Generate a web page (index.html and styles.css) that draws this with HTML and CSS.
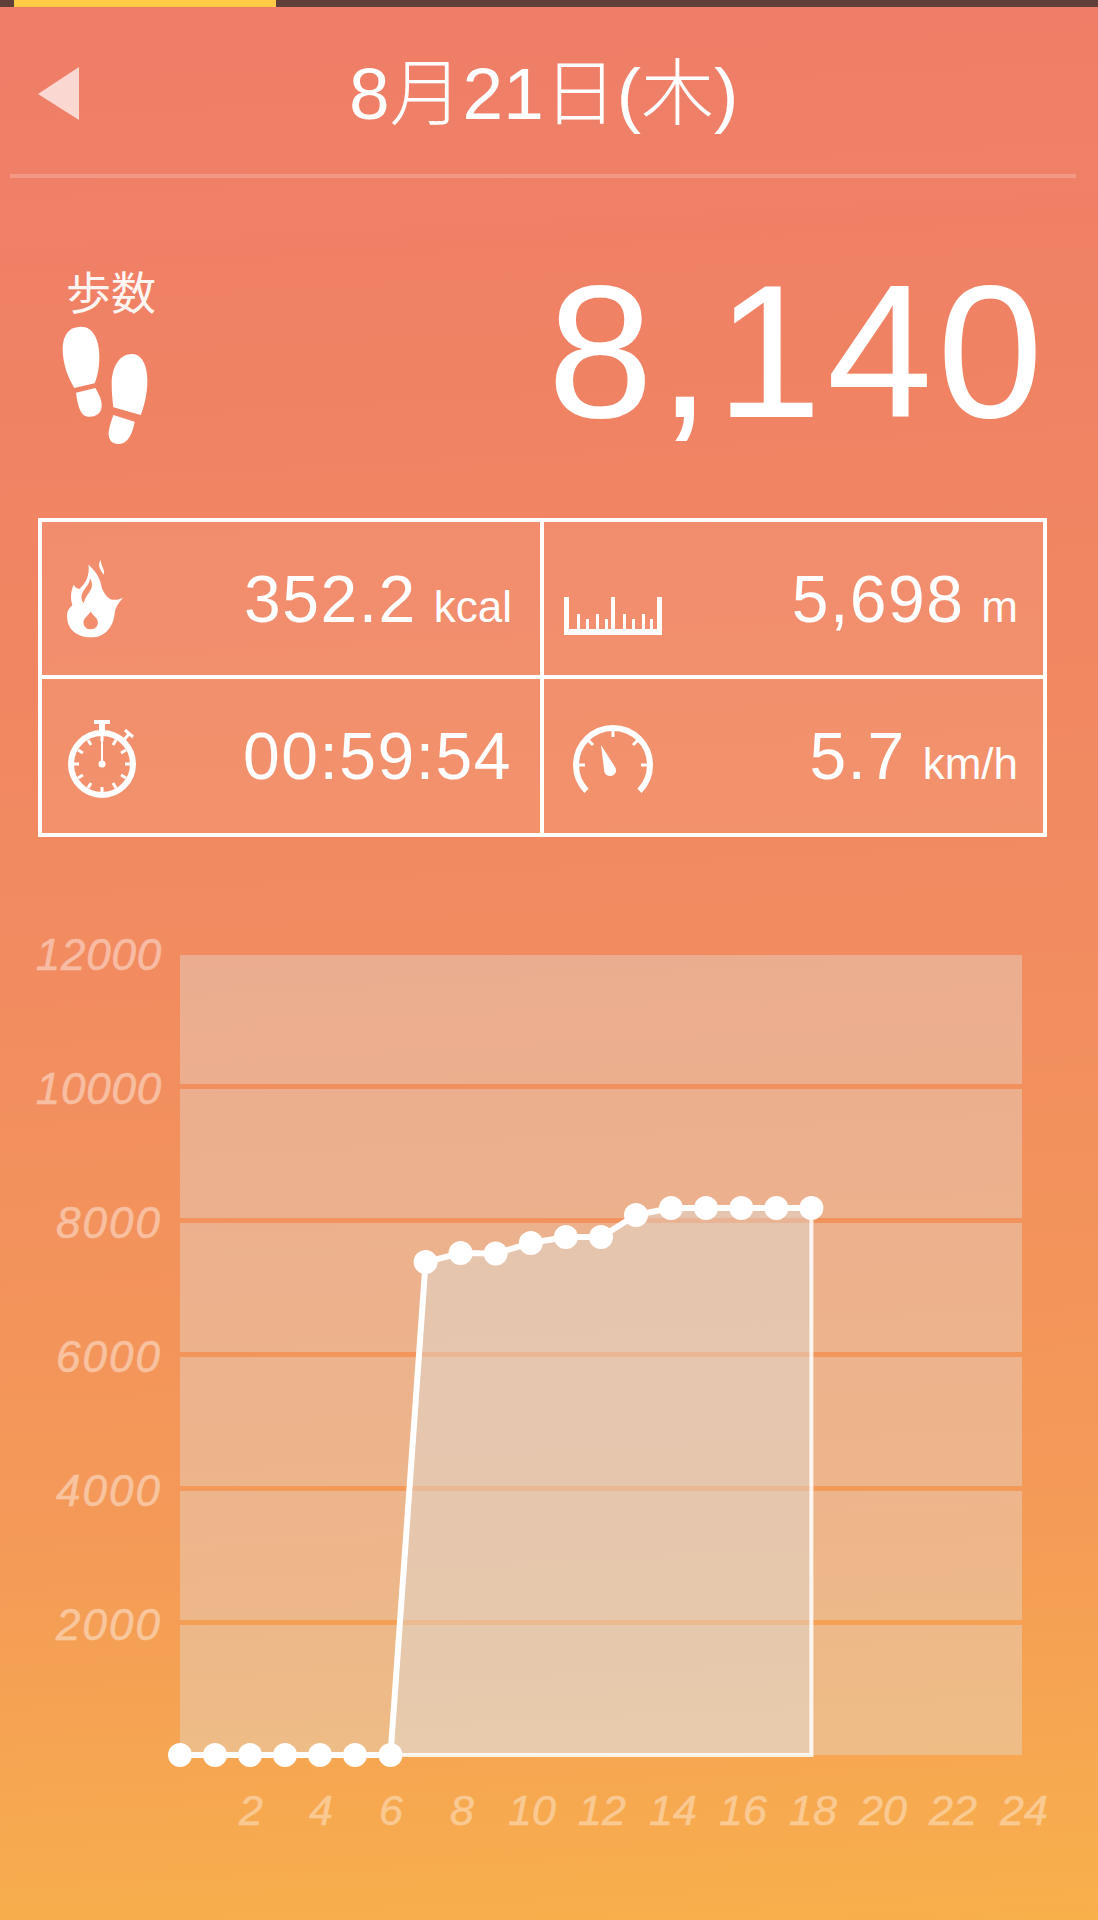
FILE: index.html
```html
<!DOCTYPE html>
<html lang="ja">
<head>
<meta charset="utf-8">
<title>8月21日(木)</title>
<link rel="stylesheet" href="styles.css">
</head>
<body>
<main class="page">
  <div class="status"><div class="status-fill"></div></div>
  <header class="header">
    <svg class="back" viewBox="0 0 41 53"><polygon points="41,0 41,53 0,27"/></svg>
    <h1 class="title">8月21日(木)</h1>
  </header>
  <div class="rule"></div>

  <section class="summary">
    <div class="steps-label">
      <div class="steps-name">歩数</div>
      <svg class="feet" viewBox="90 225 270 360">
        <path d="M153 230C190 230 208 270 208 322C208 358 200 385 194 400L133 414C115 385 98 345 98 295C98 255 118 230 153 230Z"/>
        <path d="M138 428L196 414C208 435 216 450 215 470C213 490 198 500 178 500C155 500 145 480 138 428Z"/>
        <path d="M306 312C338 312 352 350 352 395C352 430 342 470 332 495L250 472C246 440 245 420 245 395C247 345 272 312 306 312Z"/>
        <path d="M250 495L314 515C308 548 295 582 265 582C243 582 234 565 236 545C238 530 245 510 250 495Z"/>
      </svg>
    </div>
    <div class="steps-value">8,140</div>
  </section>

  <section class="stats">
    <div class="cell cell-a">
      <svg class="icon icon-flame" viewBox="100 145 180 245">
        <path fill-rule="evenodd" d="M180 382C140 382 108 360 108 318C108 305 112 296 124 286C118 268 118 245 128 225C134 235 140 238 146 236C165 220 176 195 172 165C192 182 208 205 212 235C218 250 226 262 238 268C250 272 264 270 275 264C262 280 252 292 250 312C246 352 220 382 180 382ZM178 305C170 320 156 324 157 340C159 352 168 358 178 358C192 358 200 350 200 338C200 324 188 320 178 305Z"/>
        <path class="cut" d="M176 205C178 222 160 234 153 252C149 264 152 274 158 280C161 260 178 248 182 230C184 220 180 212 176 205Z"/>
        <path d="M208 150C200 165 204 178 218 195C222 180 210 170 208 150Z"/>
      </svg>
      <div class="reading"><span class="num">352.2</span><span class="unit">kcal</span></div>
    </div>
    <div class="cell cell-b">
      <svg class="icon icon-ruler" viewBox="0 0 98 38">
        <path d="M0 0H5V32H13V17H16V32H22V22H25V32H32V17H35V32H41V22H44V32H47V0H51V32H59V17H62V32H68V22H71V32H78V17H81V32H86V22H89V32H93V0H98V38H0Z"/>
      </svg>
      <div class="reading"><span class="num">5,698</span><span class="unit">m</span></div>
    </div>
    <div class="cell cell-c">
      <svg class="icon icon-watch" viewBox="0 0 70 80">
        <circle class="line" cx="34" cy="46" r="31"/>
        <rect x="26" y="2" width="16" height="4"/>
        <rect x="31" y="5" width="6" height="9"/>
        <path class="line thin" d="M55 23L61 16M57 12L65 19"/>
        <path class="line tick" d="M34 17V23M34 69V75M5 46H11M57 46H63M20 22L23 27M45 65L48 70M10 32L15 35M53 57L58 60M10 60L15 57M53 35L58 32M20 70L23 65M45 27L48 22"/>
        <rect x="33" y="22" width="2" height="24"/>
        <circle cx="34" cy="46" r="3.500"/>
      </svg>
      <div class="reading"><span class="num">00:59:54</span></div>
    </div>
    <div class="cell cell-d">
      <svg class="icon icon-gauge" viewBox="0 0 82 70">
        <path class="line arc" d="M14.500 66.800A37 37 0 1 1 67.500 66.800"/>
        <path class="line tick" d="M41 4V13M15 15L21 21M67 15L61 21M4 41H13M69 41H78"/>
        <path d="M29 21L43 43C46 48 42 52 38 52C34 52 32 49 32 45Z"/>
      </svg>
      <div class="reading"><span class="num">5.7</span><span class="unit">km/h</span></div>
    </div>
  </section>

  <svg class="chart" viewBox="0 837 1098 1083">
    <g class="bands">
      <rect x="180" y="955" width="842" height="129"/>
      <rect x="180" y="1089" width="842" height="129"/>
      <rect x="180" y="1223" width="842" height="129"/>
      <rect x="180" y="1357" width="842" height="129"/>
      <rect x="180" y="1491" width="842" height="129"/>
      <rect x="180" y="1625" width="842" height="130"/>
    </g>
    <g class="y-labels">
      <text x="162" y="970">12000</text>
      <text x="162" y="1104">10000</text>
      <text class="wide" x="162" y="1238">8000</text>
      <text class="wide" x="162" y="1372">6000</text>
      <text class="wide" x="162" y="1506">4000</text>
      <text class="wide" x="162" y="1640">2000</text>
    </g>
    <polygon class="area" points="390.500,1755 425.600,1262 460.600,1253 495.700,1253.500 530.800,1243 565.900,1237 601,1237 636,1215 671,1208 706,1208 741.300,1208 776.400,1208 811.400,1208 811.400,1755"/>
    <polyline class="edge" points="811.400,1208 811.400,1755 390.500,1755"/>
    <polyline class="trace" points="180,1755 215,1755 250,1755 285,1755 320,1755 355,1755 390.500,1755 425.600,1262 460.600,1253 495.700,1253.500 530.800,1243 565.900,1237 601,1237 636,1215 671,1208 706,1208 741.300,1208 776.400,1208 811.400,1208"/>
    <g class="dots">
      <circle cx="180" cy="1755" r="12"/><circle cx="215" cy="1755" r="12"/><circle cx="250" cy="1755" r="12"/><circle cx="285" cy="1755" r="12"/><circle cx="320" cy="1755" r="12"/><circle cx="355" cy="1755" r="12"/><circle cx="390.500" cy="1755" r="12"/>
      <circle cx="425.600" cy="1262" r="12"/><circle cx="460.600" cy="1253" r="12"/><circle cx="495.700" cy="1253.500" r="12"/><circle cx="530.800" cy="1243" r="12"/><circle cx="565.900" cy="1237" r="12"/><circle cx="601" cy="1237" r="12"/><circle cx="636" cy="1215" r="12"/><circle cx="671" cy="1208" r="12"/><circle cx="706" cy="1208" r="12"/><circle cx="741.300" cy="1208" r="12"/><circle cx="776.400" cy="1208" r="12"/><circle cx="811.400" cy="1208" r="12"/>
    </g>
    <g class="x-labels">
      <text x="251" y="1825">2</text><text x="321" y="1825">4</text><text x="391" y="1825">6</text><text x="462" y="1825">8</text><text x="532" y="1825">10</text><text x="602" y="1825">12</text><text x="673" y="1825">14</text><text x="743" y="1825">16</text><text x="813" y="1825">18</text><text x="883" y="1825">20</text><text x="953" y="1825">22</text><text x="1024" y="1825">24</text>
    </g>
  </svg>
</main>
</body>
</html>
```
FILE: styles.css
```css
* { box-sizing: border-box; }
html, body { margin: 0; padding: 0; }
body { width: 1098px; height: 1920px; overflow: hidden; }

.page {
  width: 1098px;
  height: 1920px;
  display: flex;
  flex-direction: column;
  color: #fff;
  font-family: "Liberation Sans", "Noto Sans CJK JP", sans-serif;
  background: linear-gradient(177deg, #ef7d68 0%, #f08264 20%, #f28c60 50%, #f49a58 78%, #f8b04b 100%);
}

.status { height: 7px; background: #5f3f38; flex: none; }
.status-fill { width: 262px; height: 7px; margin-left: 14px; background: #fdcb45; }

.header { height: 167px; flex: none; display: flex; align-items: center; padding: 5px 0 0 38px; }
.back { width: 41px; height: 53px; fill: rgba(255, 255, 255, .7); flex: none; }
.title { margin: 2px 0 0 270px; font-size: 73px; line-height: 90px; font-weight: 300; white-space: nowrap; }
.rule { height: 4px; margin: 0 22px 0 10px; background: rgba(255, 255, 255, .2); flex: none; }

.summary { height: 340px; flex: none; display: flex; justify-content: space-between; padding: 0 50px 0 60px; }
.steps-label { padding-top: 87px; display: flex; flex-direction: column; }
.steps-name { margin-left: 6px; font-size: 45px; line-height: 60px; opacity: .92; height: 60px; }
.feet { width: 90px; height: 120px; fill: #fff; }
.steps-value { font-size: 190px; letter-spacing: 5px; line-height: 200px; margin-top: 73px; white-space: nowrap; }

.stats {
  flex: none;
  width: 1009px;
  height: 319px;
  margin-left: 38px;
  border: 4px solid #fff;
  display: grid;
  grid-template-columns: 502px 499px;
  grid-template-rows: 157px 154px;
}
.cell { display: flex; align-items: center; justify-content: space-between; background: rgba(255, 255, 255, .07); padding: 0 25px 0 22px; }
.cell-a, .cell-c { border-right: 4px solid #fff; padding-right: 28px; }
.cell-a, .cell-b { border-bottom: 4px solid #fff; }
.reading { margin-left: auto; white-space: nowrap; display: flex; align-items: baseline; }
.num { font-size: 66px; letter-spacing: 1.500px; line-height: 80px; }
.unit { font-size: 44px; line-height: 50px; margin-left: 17px; }

.icon { fill: #fff; flex: none; }
.icon-flame { width: 61px; height: 82px; }
.icon-ruler { width: 98px; height: 38px; margin-top: 34px; }
.cell-b { padding-left: 20px; }
.icon-watch { width: 70px; height: 80px; margin: 4px 0 0 4px; }
.cell-d { padding-left: 28px; }
.icon-gauge { width: 82px; height: 70px; margin-top: 6px; }
.line { fill: none; stroke: #fff; stroke-width: 6; }
.line.thin { stroke-width: 3; }
.line.tick { stroke-width: 3; }
.cut { fill: #f28f6d; }

.chart { display: block; width: 1098px; height: 1083px; flex: none; }
.bands rect { fill: rgba(226, 220, 210, .42); }
.area { fill: rgba(222, 220, 215, .46); stroke: none; }
.edge { fill: none; stroke: rgba(255, 255, 255, .85); stroke-width: 4; }
.trace { fill: none; stroke: #fff; stroke-width: 6; }
.dots circle { fill: #fff; }
.y-labels text, .x-labels text {
  font-family: "Liberation Sans", sans-serif;
  font-style: italic;
  font-size: 44px;
  fill: #fff;
  stroke: #fff;
  stroke-width: .5;
  opacity: .42;
}
.y-labels text { text-anchor: end; letter-spacing: .8px; }
.y-labels .wide { letter-spacing: 2px; }
.x-labels text { text-anchor: middle; font-size: 43px; opacity: .38; }
```
